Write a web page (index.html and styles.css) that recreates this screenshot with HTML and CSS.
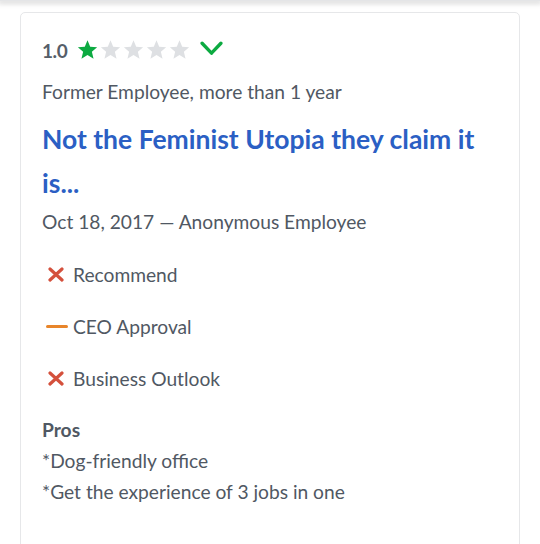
FILE: index.html
```html
<!DOCTYPE html>
<html>
<head>
<meta charset="utf-8">
<link rel="stylesheet" href="styles.css">
</head>
<body>
<div class="topbar"></div>
<div class="card">
  <div class="rating">
    <span class="score">1.0</span>
    <span class="stars">
      <svg class="star" viewBox="0 0 24 24"><path fill="#0caa41" d="M12 1.5l3.1 7.4 7.9.6-6 5.2 1.9 7.8L12 18.3l-6.9 4.2 1.9-7.8-6-5.2 7.9-.6z"/></svg>
      <svg class="star" viewBox="0 0 24 24"><path fill="#dee0e3" d="M12 1.5l3.1 7.4 7.9.6-6 5.2 1.9 7.8L12 18.3l-6.9 4.2 1.9-7.8-6-5.2 7.9-.6z"/></svg>
      <svg class="star" viewBox="0 0 24 24"><path fill="#dee0e3" d="M12 1.5l3.1 7.4 7.9.6-6 5.2 1.9 7.8L12 18.3l-6.9 4.2 1.9-7.8-6-5.2 7.9-.6z"/></svg>
      <svg class="star" viewBox="0 0 24 24"><path fill="#dee0e3" d="M12 1.5l3.1 7.4 7.9.6-6 5.2 1.9 7.8L12 18.3l-6.9 4.2 1.9-7.8-6-5.2 7.9-.6z"/></svg>
      <svg class="star" viewBox="0 0 24 24"><path fill="#dee0e3" d="M12 1.5l3.1 7.4 7.9.6-6 5.2 1.9 7.8L12 18.3l-6.9 4.2 1.9-7.8-6-5.2 7.9-.6z"/></svg>
    </span>
    <svg class="chev" viewBox="0 0 22 14"><path d="M2 2l9 9.5L20 2" fill="none" stroke="#0caa41" stroke-width="3.2" stroke-linecap="round" stroke-linejoin="round"/></svg>
  </div>
  <div class="meta">Former Employee, more than 1 year</div>
  <h2 class="title">Not the Feminist Utopia they claim it is...</h2>
  <div class="date">Oct 18, 2017 — Anonymous Employee</div>
  <ul class="checks">
    <li><span class="ico"><svg viewBox="0 0 18 15" class="x"><path d="M3 2l12 11M15 2L3 13" stroke="#d4503c" stroke-width="3.2" stroke-linecap="round"/></svg></span>Recommend</li>
    <li><span class="ico"><span class="dash"></span></span>CEO Approval</li>
    <li><span class="ico"><svg viewBox="0 0 18 15" class="x"><path d="M3 2l12 11M15 2L3 13" stroke="#d4503c" stroke-width="3.2" stroke-linecap="round"/></svg></span>Business Outlook</li>
  </ul>
  <div class="pros">
    <div class="pros-h">Pros</div>
    <p>*Dog-friendly office</p>
    <p>*Get the experience of 3 jobs in one</p>
  </div>
</div>
</body>
</html>
```

FILE: styles.css
```css
html, body {
  margin: 0;
  padding: 0;
  background: #ffffff;
}
body {
  font-family: Lato, "Open Sans", sans-serif;
  color: #505863;
  overflow: hidden;
  height: 544px;
}
.topbar {
  height: 1px;
  background: #e4e5e7;
  box-shadow: 0 1px 5px 2px rgba(0,0,0,0.14);
  position: relative;
  z-index: 2;
}
.card {
  margin: 11px 20px 0 20px;
  border: 1px solid #e6e7e9;
  border-radius: 5px;
  padding: 25px 21px 40px 21px;
  background: #fff;
  height: 600px;
}
.rating {
  display: flex;
  align-items: center;
  height: 24px;
}
.score {
  font-size: 19px;
  font-weight: 700;
  color: #565e69;
  letter-spacing: -0.4px;
}
.stars {
  display: flex;
  margin-left: 10px;
  gap: 2px;
}
.star {
  width: 21px;
  height: 21px;
  margin-top: -1px;
}
.chev {
  width: 23px;
  height: 15px;
  margin-left: 10px;
  margin-top: -3px;
}
.meta {
  font-size: 19.2px;
  margin-top: 16px;
  line-height: 28px;
}
.title {
  font-size: 26.5px;
  font-weight: 700;
  color: #2b5fc4;
  line-height: 44px;
  margin: 11px 0 0 0;
}
.date {
  font-size: 19.2px;
  line-height: 28px;
  margin-top: 3px;
}
.checks {
  list-style: none;
  padding: 0;
  margin: 24px 0 0 0;
}
.checks li {
  display: flex;
  align-items: center;
  font-size: 19.2px;
  height: 28px;
  margin-bottom: 24px;
}
.ico {
  width: 31px;
  flex: none;
  display: flex;
  align-items: center;
}
.x {
  width: 18px;
  height: 15px;
  margin-left: 5px;
}
.dash {
  display: block;
  width: 22px;
  height: 3px;
  border-radius: 2px;
  background: #e8852a;
  margin-left: 4px;
}
.pros {
  margin-top: -1px;
}
.pros-h {
  font-size: 19.2px;
  font-weight: 700;
  line-height: 30px;
}
.pros p {
  margin: 0;
  font-size: 19.2px;
  line-height: 31px;
}
```
